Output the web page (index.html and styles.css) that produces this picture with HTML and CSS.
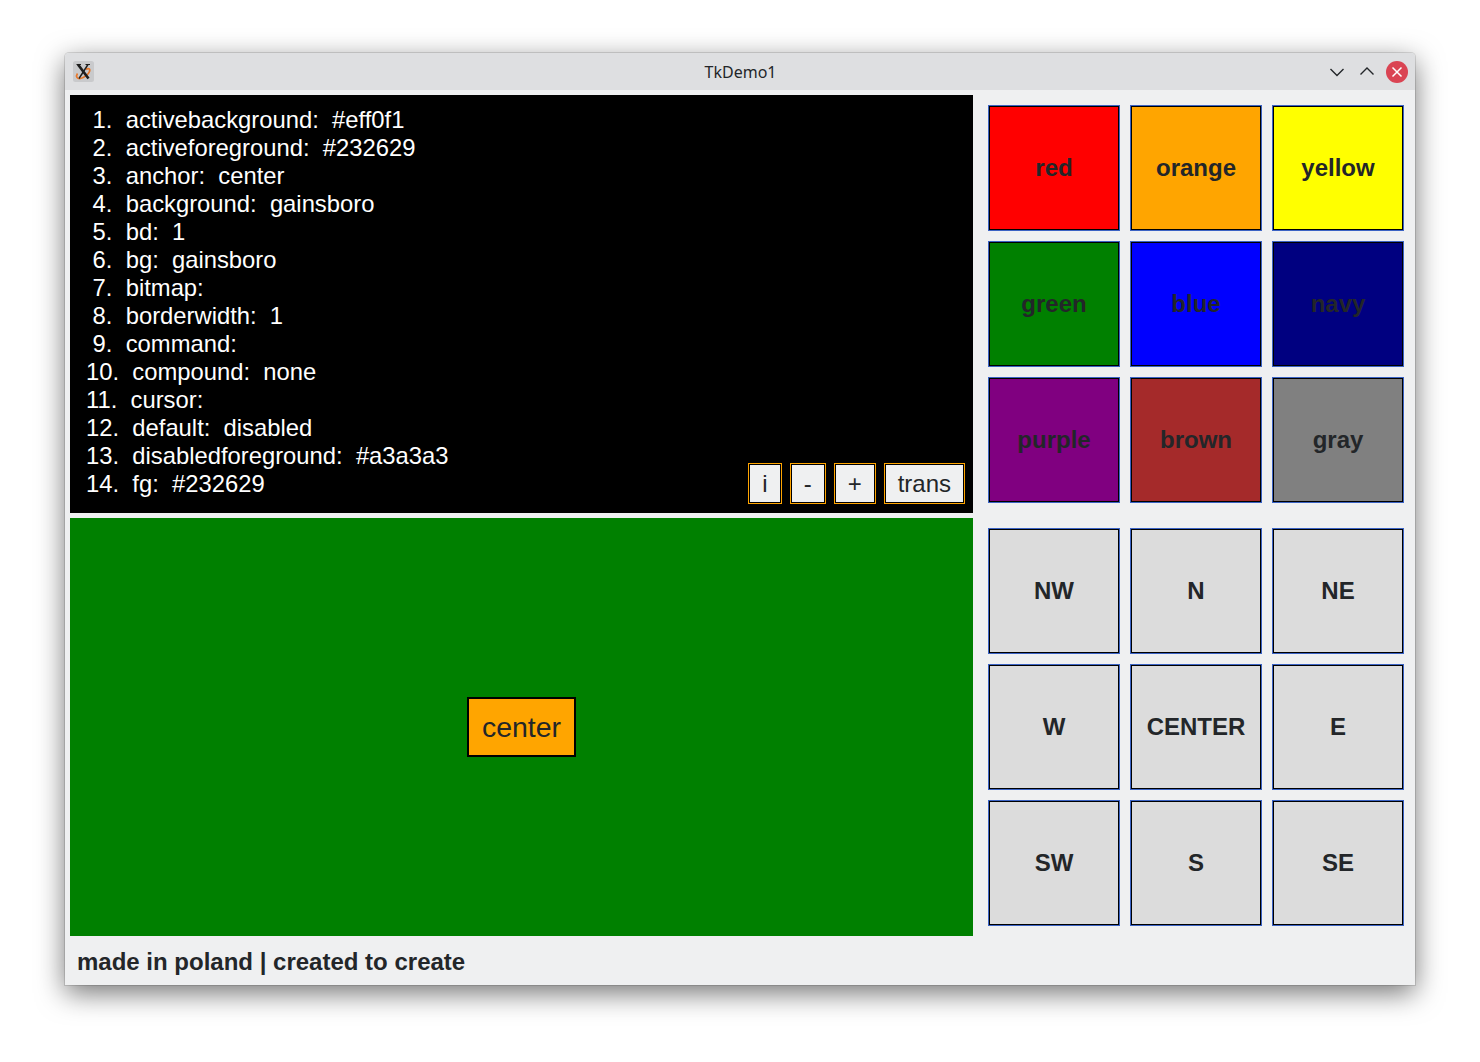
FILE: index.html
```html
<!DOCTYPE html>
<html>
<head>
<meta charset="utf-8">
<title>TkDemo1</title>
<link rel="stylesheet" href="styles.css">
</head>
<body>
<div class="window">
  <div class="titlebar">
    <div class="tb-left">
      <svg class="app-icon" width="21" height="21" viewBox="0 0 21 21">
        <rect x="0" y="0" width="21" height="21" rx="2.5" fill="#c9cacc"/>
        <path d="M4.5 12.5 C2.5 15.5 4 18 7.5 17.5 C11 17 15.5 13.5 16.5 10.5 C17.5 7.5 15 7 13 8.5" fill="none" stroke="#e8782a" stroke-width="1.7"/>
        <path d="M5 3.5 L15.5 17.5" stroke="#1e1e1e" stroke-width="2.6" fill="none"/>
        <path d="M15 3.5 L6 17.5" stroke="#1e1e1e" stroke-width="1.4" fill="none"/>
        <path d="M3.5 3.5 H8 M12.5 3.5 H17" stroke="#1e1e1e" stroke-width="1.2"/>
      </svg>
    </div>
    <div class="title">TkDemo1</div>
    <div class="tb-right">
      <svg class="tb-btn tb-down" width="16" height="16" viewBox="0 0 16 16"><path d="M1.5 5 L8 11.5 L14.5 5" fill="none" stroke="#232629" stroke-width="1.4"/></svg>
      <svg class="tb-btn tb-up" width="16" height="16" viewBox="0 0 16 16"><path d="M1.5 10.5 L8 4 L14.5 10.5" fill="none" stroke="#232629" stroke-width="1.4"/></svg>
      <svg class="tb-close" width="22" height="22" viewBox="0 0 22 22"><circle cx="11" cy="11" r="11" fill="#da4453"/><path d="M6.5 6.5 L15.5 15.5 M15.5 6.5 L6.5 15.5" stroke="#ffffff" stroke-width="1.5"/></svg>
    </div>
  </div>
  <div class="content">
    <div class="main">
      <div class="left">
        <div class="listpanel">
          <div class="list">
            <div class="line"> 1.  activebackground:  #eff0f1</div>
            <div class="line"> 2.  activeforeground:  #232629</div>
            <div class="line"> 3.  anchor:  center</div>
            <div class="line"> 4.  background:  gainsboro</div>
            <div class="line"> 5.  bd:  1</div>
            <div class="line"> 6.  bg:  gainsboro</div>
            <div class="line"> 7.  bitmap:  </div>
            <div class="line"> 8.  borderwidth:  1</div>
            <div class="line"> 9.  command:  </div>
            <div class="line">10.  compound:  none</div>
            <div class="line">11.  cursor:  </div>
            <div class="line">12.  default:  disabled</div>
            <div class="line">13.  disabledforeground:  #a3a3a3</div>
            <div class="line">14.  fg:  #232629</div>
          </div>
          <div class="tools">
            <button class="tool">i</button>
            <button class="tool">-</button>
            <button class="tool">+</button>
            <button class="tool">trans</button>
          </div>
        </div>
        <div class="greenpanel">
          <button class="centerbtn">center</button>
        </div>
      </div>
      <div class="right">
        <div class="grid">
          <div class="cell c-red">red</div>
          <div class="cell c-orange">orange</div>
          <div class="cell c-yellow">yellow</div>
          <div class="cell c-green">green</div>
          <div class="cell c-blue">blue</div>
          <div class="cell c-navy">navy</div>
          <div class="cell c-purple">purple</div>
          <div class="cell c-brown">brown</div>
          <div class="cell c-gray">gray</div>
        </div>
        <div class="grid">
          <div class="cell c-gb">NW</div>
          <div class="cell c-gb">N</div>
          <div class="cell c-gb">NE</div>
          <div class="cell c-gb">W</div>
          <div class="cell c-gb">CENTER</div>
          <div class="cell c-gb">E</div>
          <div class="cell c-gb">SW</div>
          <div class="cell c-gb">S</div>
          <div class="cell c-gb">SE</div>
        </div>
      </div>
    </div>
    <div class="footer">made in poland | created to create</div>
  </div>
</div>
</body>
</html>
```

FILE: styles.css
```css
* { box-sizing: border-box; }

html, body {
  margin: 0;
  padding: 0;
  background: #ffffff;
  width: 1480px;
  height: 1062px;
  overflow: hidden;
  font-family: "Liberation Sans", Arial, sans-serif;
  color: #232629;
}

.window {
  margin: 53px 0 0 65px;
  width: 1350px;
  height: 932px;
  background: #eff0f1;
  border-radius: 4px 4px 0 0;
  box-shadow: 0 8px 28px rgba(0, 0, 0, 0.55), 0 0 0 1px rgba(0, 0, 0, 0.12);
  display: flex;
  flex-direction: column;
  overflow: hidden;
}

.titlebar {
  height: 37px;
  background: #dedfe1;
  display: flex;
  align-items: center;
  justify-content: space-between;
  padding: 0 7px 0 8px;
}

.tb-left {
  display: flex;
  align-items: center;
  width: 120px;
}

.app-icon { display: block; margin-top: 0; }

.title {
  font-family: "Noto Sans", sans-serif;
  font-size: 16px;
  color: #232629;
  flex: 1;
  text-align: center;
}

.tb-right {
  width: 120px;
  display: flex;
  align-items: center;
  justify-content: flex-end;
}

.tb-btn { display: block; }
.tb-down { margin-right: 14px; margin-top: 1px; }
.tb-up { margin-right: 11px; }
.tb-close { display: block; margin-top: 1px; }

.content {
  flex: 1;
  padding: 5px 5px 0 5px;
  display: flex;
  flex-direction: column;
}

.main {
  display: flex;
  height: 841px;
}

.left {
  width: 903px;
  display: flex;
  flex-direction: column;
  gap: 5px;
}

.listpanel {
  height: 418px;
  background: #000000;
  display: flex;
  justify-content: space-between;
  align-items: flex-end;
  padding: 11px 8px 9px 16px;
}

.list {
  align-self: flex-start;
  color: #ffffff;
  font-size: 23.8px;
  line-height: 28px;
}

.line { white-space: pre; }

.tools {
  display: flex;
  gap: 8px;
}

.tool {
  height: 41px;
  padding: 0 13px;
  margin: 0;
  border: 1px solid #ffa500;
  box-shadow: inset 0 0 0 1px #000000;
  background: #eff0f1;
  color: #232629;
  font-family: "Liberation Sans", Arial, sans-serif;
  font-size: 24px;
  line-height: 28px;
  cursor: pointer;
}

.greenpanel {
  height: 418px;
  background: #008000;
  display: flex;
  align-items: center;
  justify-content: center;
}

.centerbtn {
  background: #ffa500;
  border: 2px solid #000000;
  padding: 12px 13px;
  margin: 0;
  font-family: "Liberation Sans", Arial, sans-serif;
  font-size: 28.5px;
  line-height: 32px;
  color: #232629;
}

.right {
  flex: 1;
  display: flex;
  flex-direction: column;
  gap: 5px;
}

.grid {
  height: 418px;
  padding: 10px 0 10px 15px;
  display: grid;
  grid-template-columns: repeat(3, 132px);
  grid-auto-rows: 126px;
  gap: 10px;
}

.cell {
  border: 1px solid #3b63c4;
  box-shadow: inset 0 0 0 1px #000000;
  display: flex;
  align-items: center;
  justify-content: center;
  font-weight: bold;
  font-size: 24px;
  color: #232629;
}

.c-red { background: #ff0000; }
.c-orange { background: #ffa500; }
.c-yellow { background: #ffff00; }
.c-green { background: #008000; }
.c-blue { background: #0000ff; }
.c-navy { background: #000080; }
.c-purple { background: #800080; }
.c-brown { background: #a52a2a; }
.c-gray { background: #808080; }
.c-gb { background: #dcdcdc; }

.footer {
  height: 49px;
  display: flex;
  align-items: center;
  padding-left: 7px;
  padding-top: 2px;
  font-weight: bold;
  font-size: 24px;
  color: #232629;
}
```
